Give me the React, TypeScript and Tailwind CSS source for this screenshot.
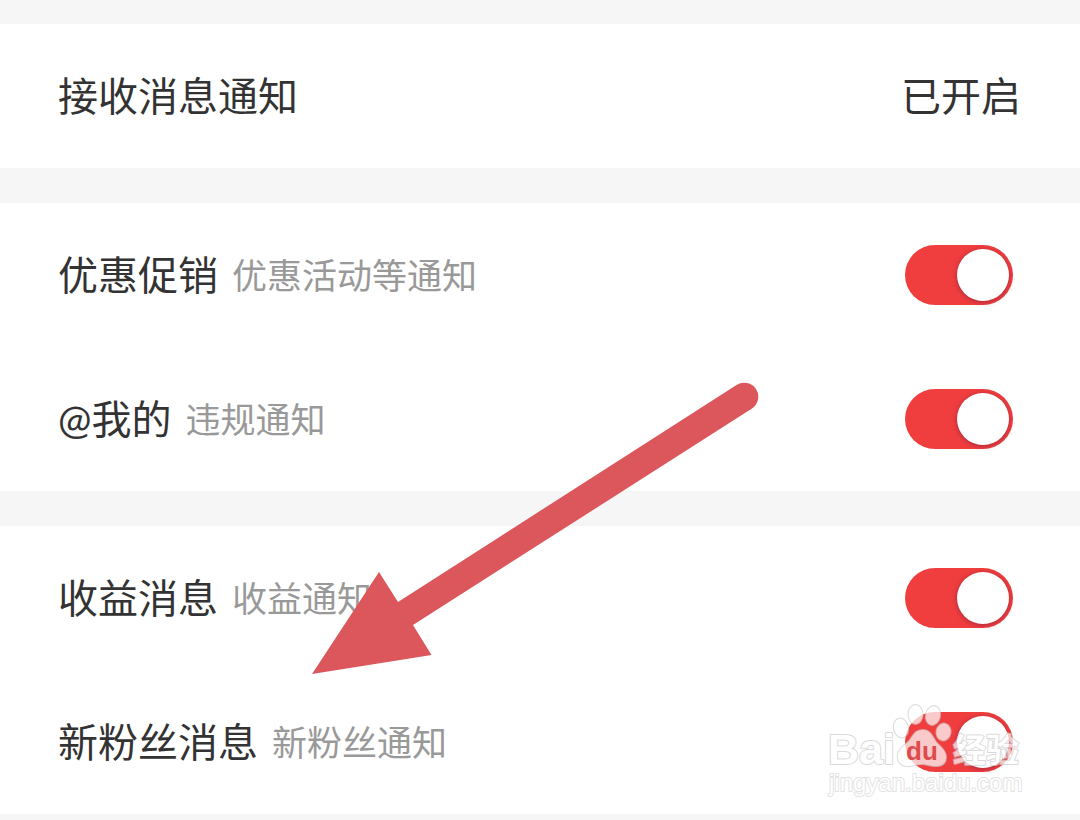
import { useState } from 'react';

type Item = { id: string; title: string; note: string };

const groups: Item[][] = [
  [
    { id: 'promo', title: '优惠促销', note: '优惠活动等通知' },
    { id: 'mention', title: '@我的', note: '违规通知' },
  ],
  [
    { id: 'income', title: '收益消息', note: '收益通知' },
    { id: 'fans', title: '新粉丝消息', note: '新粉丝通知' },
  ],
];

function ToggleRow({ item }: { item: Item }) {
  const [on, setOn] = useState(true);
  return (
    <div className="flex h-36 items-center justify-between pr-[67px] pl-[58px]">
      <label htmlFor={item.id} className="flex items-center gap-[14px] pb-px">
        <span className="text-[40px] leading-[56px] text-[#333333]">{item.title}</span>
        <span className="text-[35px] leading-[56px] text-[#999999]">{item.note}</span>
      </label>
      <input
        id={item.id}
        type="checkbox"
        role="switch"
        checked={on}
        onChange={(e) => setOn(e.target.checked)}
        className="flex h-[60px] w-[108px] shrink-0 cursor-pointer appearance-none items-center justify-start rounded-full bg-[#d5d5d5] px-1 before:size-[52px] before:rounded-full before:bg-white before:shadow-[0_1px_5px_rgba(90,20,50,0.5)] before:content-[''] checked:justify-end checked:bg-[#f03e3f]"
      />
    </div>
  );
}

function Arrow() {
  return (
    <svg
      className="pointer-events-none absolute top-[380px] left-[310px]"
      width="450"
      height="298"
      viewBox="310 380 450 298"
      aria-hidden="true"
    >
      <path
        d="M312 674 L379 572 L398 602 L736.500 385 A14 14 0 0 1 752 408.500 L413 625 L431.500 655 Z"
        fill="#db575c"
      />
    </svg>
  );
}

function Watermark() {
  return (
    <svg
      className="pointer-events-none absolute top-[700px] right-[54px]"
      width="200"
      height="104"
      viewBox="826 700 200 104"
      role="img"
      aria-label="Baidu 经验"
    >
      <g
        fill="#ffffff"
        opacity="0.72"
        stroke="#cccccc"
        strokeWidth="2"
        strokeLinejoin="round"
        paintOrder="stroke"
      >
        <ellipse cx="901" cy="728" rx="7" ry="9.500" transform="rotate(-12 901 728)" />
        <ellipse cx="915.500" cy="714.500" rx="7" ry="9.500" />
        <ellipse cx="933" cy="715.500" rx="7" ry="9.500" transform="rotate(12 933 715.500)" />
        <ellipse cx="943.500" cy="732" rx="7" ry="8.500" transform="rotate(10 943.500 732)" />
        <path d="M923 730 C930 730 932 736 936 742 C940 747 946 750 946 757 C946 763 942 766 936 766 C930 766 927 764 922 764 C917 764 913 766 908 766 C901 766 897 762 898 755 C899 748 906 745 910 740 C914 734 916 730 923 730 Z" />
        <text
          x="828"
          y="764"
          fontSize="43"
          className="font-['Liberation_Sans',sans-serif] font-bold"
        >
          Bai
        </text>
        <text
          x="953"
          y="762"
          fontSize="33"
          className="font-['Noto_Sans_CJK_SC',sans-serif] font-bold"
        >
          经验
        </text>
        <text
          x="829"
          y="791"
          fontSize="24"
          stroke="#d8d8d8"
          className="font-['Liberation_Sans',sans-serif]"
        >
          jingyan.baidu.com
        </text>
      </g>
      <text
        x="906"
        y="760"
        fontSize="26"
        fill="#df4a4d"
        className="font-['Liberation_Sans',sans-serif] font-bold"
      >
        du
      </text>
    </svg>
  );
}

export default function App() {
  return (
    <main className="relative min-h-screen overflow-hidden bg-[#f6f6f6] pt-6 font-[Lato,'Noto_Sans_CJK_SC',sans-serif]">
      <div className="flex flex-col gap-[35px]">
        <section className="flex h-36 items-center justify-between bg-white pr-[59px] pb-px pl-[58px] text-[40px] leading-[56px] text-[#333333]">
          <span>接收消息通知</span>
          <span>已开启</span>
        </section>
        {groups.map((items) => (
          <section key={items[0].id} className="bg-white">
            {items.map((item) => (
              <ToggleRow key={item.id} item={item} />
            ))}
          </section>
        ))}
      </div>
      <Arrow />
      <Watermark />
    </main>
  );
}
